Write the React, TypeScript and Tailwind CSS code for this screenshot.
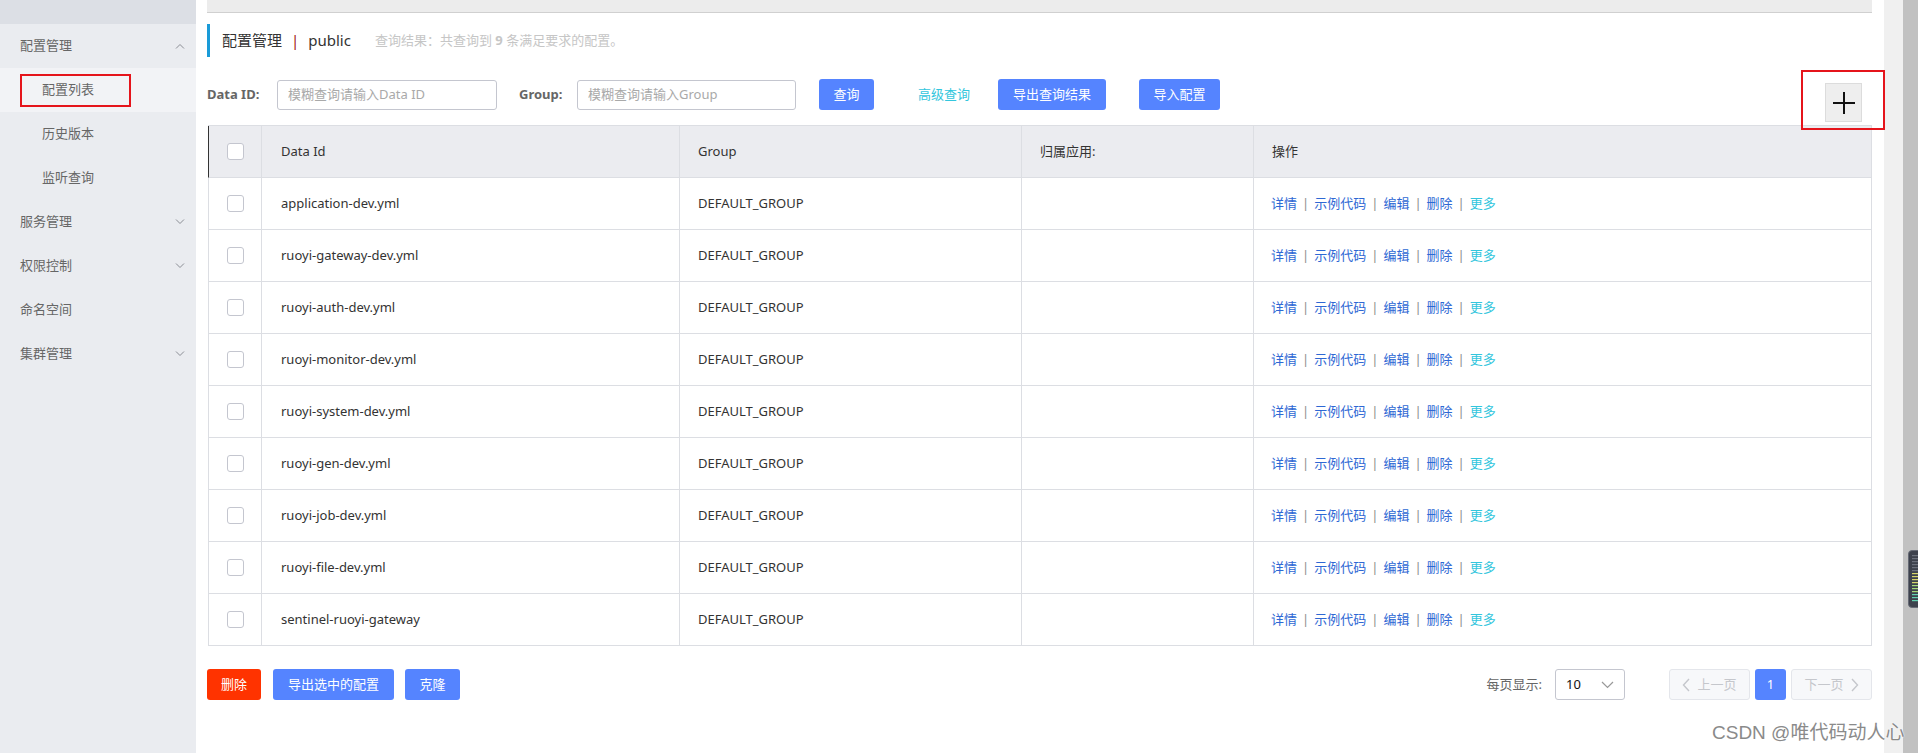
import React from "react";

const rows = [
  "application-dev.yml",
  "ruoyi-gateway-dev.yml",
  "ruoyi-auth-dev.yml",
  "ruoyi-monitor-dev.yml",
  "ruoyi-system-dev.yml",
  "ruoyi-gen-dev.yml",
  "ruoyi-job-dev.yml",
  "ruoyi-file-dev.yml",
  "sentinel-ruoyi-gateway",
];

function Chevron({ up }: { up?: boolean }) {
  return (
    <svg width="10" height="6" viewBox="0 0 10 6" className="shrink-0">
      <polyline
        points={up ? "1,5.5 5,1.5 9,5.5" : "1,0.5 5,4.5 9,0.5"}
        fill="none"
        stroke="#8a8d94"
        strokeWidth="1"
      />
    </svg>
  );
}

function Checkbox() {
  return <div className="w-[17px] h-[17px] rounded-[3px] border border-[#c4c6cf] bg-white" />;
}

function Sep() {
  return <span className="mx-[5px] text-[#8c8c8c]">|</span>;
}

export default function App() {
  const cols = "grid grid-cols-[53px_418px_342px_232px_1fr]";
  return (
    <div className="relative flex h-[753px] w-[1918px] overflow-hidden bg-white font-['Noto_Sans','Noto_Sans_CJK_SC',sans-serif] text-[13px] text-[#333]">
      {/* Sidebar */}
      <aside className="w-[196px] shrink-0 bg-[#eaecf0] flex flex-col">
        <div className="h-[24px] bg-[#dcdfe5]" />
        <div className="h-[44px] flex items-center justify-between pl-[20px] pr-[11px] text-[#666]">
          <span>配置管理</span>
          <Chevron up />
        </div>
        <div className="h-[44px] flex items-center pl-[42px] bg-[#f2f3f6] text-[#666]">配置列表</div>
        <div className="h-[44px] flex items-center pl-[42px] text-[#666]">历史版本</div>
        <div className="h-[44px] flex items-center pl-[42px] text-[#666]">监听查询</div>
        <div className="h-[44px] flex items-center justify-between pl-[20px] pr-[11px] text-[#666]">
          <span>服务管理</span>
          <Chevron />
        </div>
        <div className="h-[44px] flex items-center justify-between pl-[20px] pr-[11px] text-[#666]">
          <span>权限控制</span>
          <Chevron />
        </div>
        <div className="h-[44px] flex items-center pl-[20px] text-[#666]">命名空间</div>
        <div className="h-[44px] flex items-center justify-between pl-[20px] pr-[11px] text-[#666]">
          <span>集群管理</span>
          <Chevron />
        </div>
      </aside>

      {/* Main */}
      <main className="relative flex-1 pl-[11px] pr-[12px]">
        <div className="h-[13px] bg-[#ececec] border-b border-[#d0d0d0]" />

        <div className="mt-[11px] h-[33px] border-l-[3px] border-[#1a9bd8] flex items-center pl-[12px]">
          <span className="text-[15px] font-normal text-[#333]">配置管理</span>
          <span className="text-[15px] text-[#a01818] mx-[9px]">|</span>
          <span className="text-[15px] font-normal text-[#333]">public</span>
          <span className="ml-[24px] text-[#c6c6c6]">
            查询结果：共查询到 <b className="font-bold">9</b> 条满足要求的配置。
          </span>
        </div>

        <div className="mt-[22px] h-[31px] flex items-center">
          <span className="w-[56px] font-bold text-[#666] whitespace-nowrap">Data ID:</span>
          <div className="ml-[14px] w-[220px] h-[30px] border border-[#c4c6cf] rounded-[3px] flex items-center pl-[10px] text-[#a9a9a9]">
            模糊查询请输入Data ID
          </div>
          <span className="ml-[22px] w-[44px] font-bold text-[#666] whitespace-nowrap">Group:</span>
          <div className="ml-[14px] w-[219px] h-[30px] border border-[#c4c6cf] rounded-[3px] flex items-center pl-[10px] text-[#a9a9a9]">
            模糊查询请输入Group
          </div>
          <div className="ml-[23px] w-[55px] h-[31px] rounded-[3px] bg-[#5584ff] text-white flex items-center justify-center">查询</div>
          <span className="ml-[44px] text-[#33c6dd]">高级查询</span>
          <div className="ml-[28px] w-[108px] h-[31px] rounded-[3px] bg-[#5584ff] text-white flex items-center justify-center">导出查询结果</div>
          <div className="ml-[33px] w-[81px] h-[31px] rounded-[3px] bg-[#5584ff] text-white flex items-center justify-center">导入配置</div>
        </div>

        {/* Table */}
        <div className="mt-[15px] ml-[1px] border-t border-r border-[#dcdee3]">
          <div className={`${cols} h-[52px] bg-[#ebecf0] border-b border-l border-b-[#dcdee3] border-l-[#333]`}>
            <div className="border-r border-[#dcdee3] flex items-center justify-center"><Checkbox /></div>
            <div className="border-r border-[#dcdee3] flex items-center pl-[19px]">Data Id</div>
            <div className="border-r border-[#dcdee3] flex items-center pl-[18px]">Group</div>
            <div className="border-r border-[#dcdee3] flex items-center pl-[18px]">归属应用:</div>
            <div className="flex items-center pl-[18px]">操作</div>
          </div>
          {rows.map((r) => (
            <div key={r} className={`${cols} h-[52px] border-b border-l border-[#dcdee3]`}>
              <div className="border-r border-[#dcdee3] flex items-center justify-center"><Checkbox /></div>
              <div className="border-r border-[#dcdee3] flex items-center pl-[19px]">{r}</div>
              <div className="border-r border-[#dcdee3] flex items-center pl-[18px]">DEFAULT_GROUP</div>
              <div className="border-r border-[#dcdee3]" />
              <div className="flex items-center pl-[17px] text-[#2e68d4]">
                <span>详情</span>
                <Sep />
                <span>示例代码</span>
                <Sep />
                <span>编辑</span>
                <Sep />
                <span>删除</span>
                <Sep />
                <span className="text-[#33c6dd]">更多</span>
              </div>
            </div>
          ))}
        </div>

        {/* Bottom */}
        <div className="mt-[23px] h-[31px] flex items-center">
          <div className="w-[54px] h-[31px] rounded-[3px] bg-[#ff3300] text-white flex items-center justify-center">删除</div>
          <div className="ml-[12px] w-[121px] h-[31px] rounded-[3px] bg-[#5584ff] text-white flex items-center justify-center">导出选中的配置</div>
          <div className="ml-[11px] w-[55px] h-[31px] rounded-[3px] bg-[#5584ff] text-white flex items-center justify-center">克隆</div>
          <div className="ml-auto flex items-center">
            <span className="text-[#666]">每页显示:</span>
            <div className="ml-[13px] w-[70px] h-[31px] border border-[#c4c6cf] rounded-[3px] flex items-center justify-between pl-[10px] pr-[10px]">
              <span className="text-[#111]">10</span>
              <svg width="13" height="8" viewBox="0 0 13 8">
                <polyline points="1,1 6.5,6.5 12,1" fill="none" stroke="#999" strokeWidth="1.2" />
              </svg>
            </div>
            <div className="ml-[44px] w-[81px] h-[31px] rounded-[3px] border border-[#e4e6eb] bg-[#f7f8fa] text-[#c5c7cc] flex items-center justify-center">
              <svg width="9" height="14" viewBox="0 0 9 14" className="mr-[6px]">
                <polyline points="7,1 1.5,7 7,13" fill="none" stroke="#c5c7cc" strokeWidth="1.4" />
              </svg>
              上一页
            </div>
            <div className="ml-[5px] w-[31px] h-[31px] rounded-[3px] bg-[#5584ff] text-white flex items-center justify-center">1</div>
            <div className="ml-[5px] w-[81px] h-[31px] rounded-[3px] border border-[#e4e6eb] bg-[#f7f8fa] text-[#c5c7cc] flex items-center justify-center">
              下一页
              <svg width="9" height="14" viewBox="0 0 9 14" className="ml-[6px]">
                <polyline points="2,1 7.5,7 2,13" fill="none" stroke="#c5c7cc" strokeWidth="1.4" />
              </svg>
            </div>
          </div>
        </div>

        {/* Floating plus button */}
        <div className="absolute right-[22px] top-[83px] w-[37px] h-[39px] bg-[#eeeeee] border border-[#dcdcdc] flex items-center justify-center">
          <svg width="22" height="22" viewBox="0 0 22 22">
            <rect x="10" y="0" width="2" height="22" fill="#111" />
            <rect x="0" y="10" width="22" height="2" fill="#111" />
          </svg>
        </div>
      </main>

      {/* Scrollbar areas */}
      <div className="w-[19px] shrink-0 bg-[#f0f0f0]" />
      <div className="w-[15px] shrink-0 bg-[#c1c1c1]" />

      {/* Annotation boxes */}
      <div className="absolute left-[20px] top-[74px] w-[111px] h-[33px] border-2 border-[#e5141b]" />
      <div className="absolute left-[1801px] top-[70px] w-[84px] h-[60px] border-2 border-[#e5141b]" />

      {/* Side widget */}
      <div className="absolute left-[1908px] top-[550px] w-[16px] h-[58px] rounded-[4px] bg-[#3d414c] border border-[#666a75]">
        <svg width="10" height="48" viewBox="0 0 10 48" className="ml-[3px] mt-[4px]">
          {Array.from({ length: 16 }).map((_, i) => (
            <rect
              key={i}
              x="0"
              y={i * 3}
              width="10"
              height="1.2"
              fill={i < 6 ? "#6c707c" : i < 10 ? "#d6d46a" : i < 13 ? "#a6d878" : "#62d0b0"}
            />
          ))}
        </svg>
      </div>

      {/* Watermark */}
      <div className="absolute left-[1712px] top-[721px] text-[19px] leading-[24px] text-[#8a8a8a] whitespace-nowrap font-['Liberation_Sans','Noto_Sans_CJK_SC',sans-serif] [text-shadow:0_0_2px_#fff,0_0_1px_#fff]">
        CSDN @唯代码动人心
      </div>
    </div>
  );
}
